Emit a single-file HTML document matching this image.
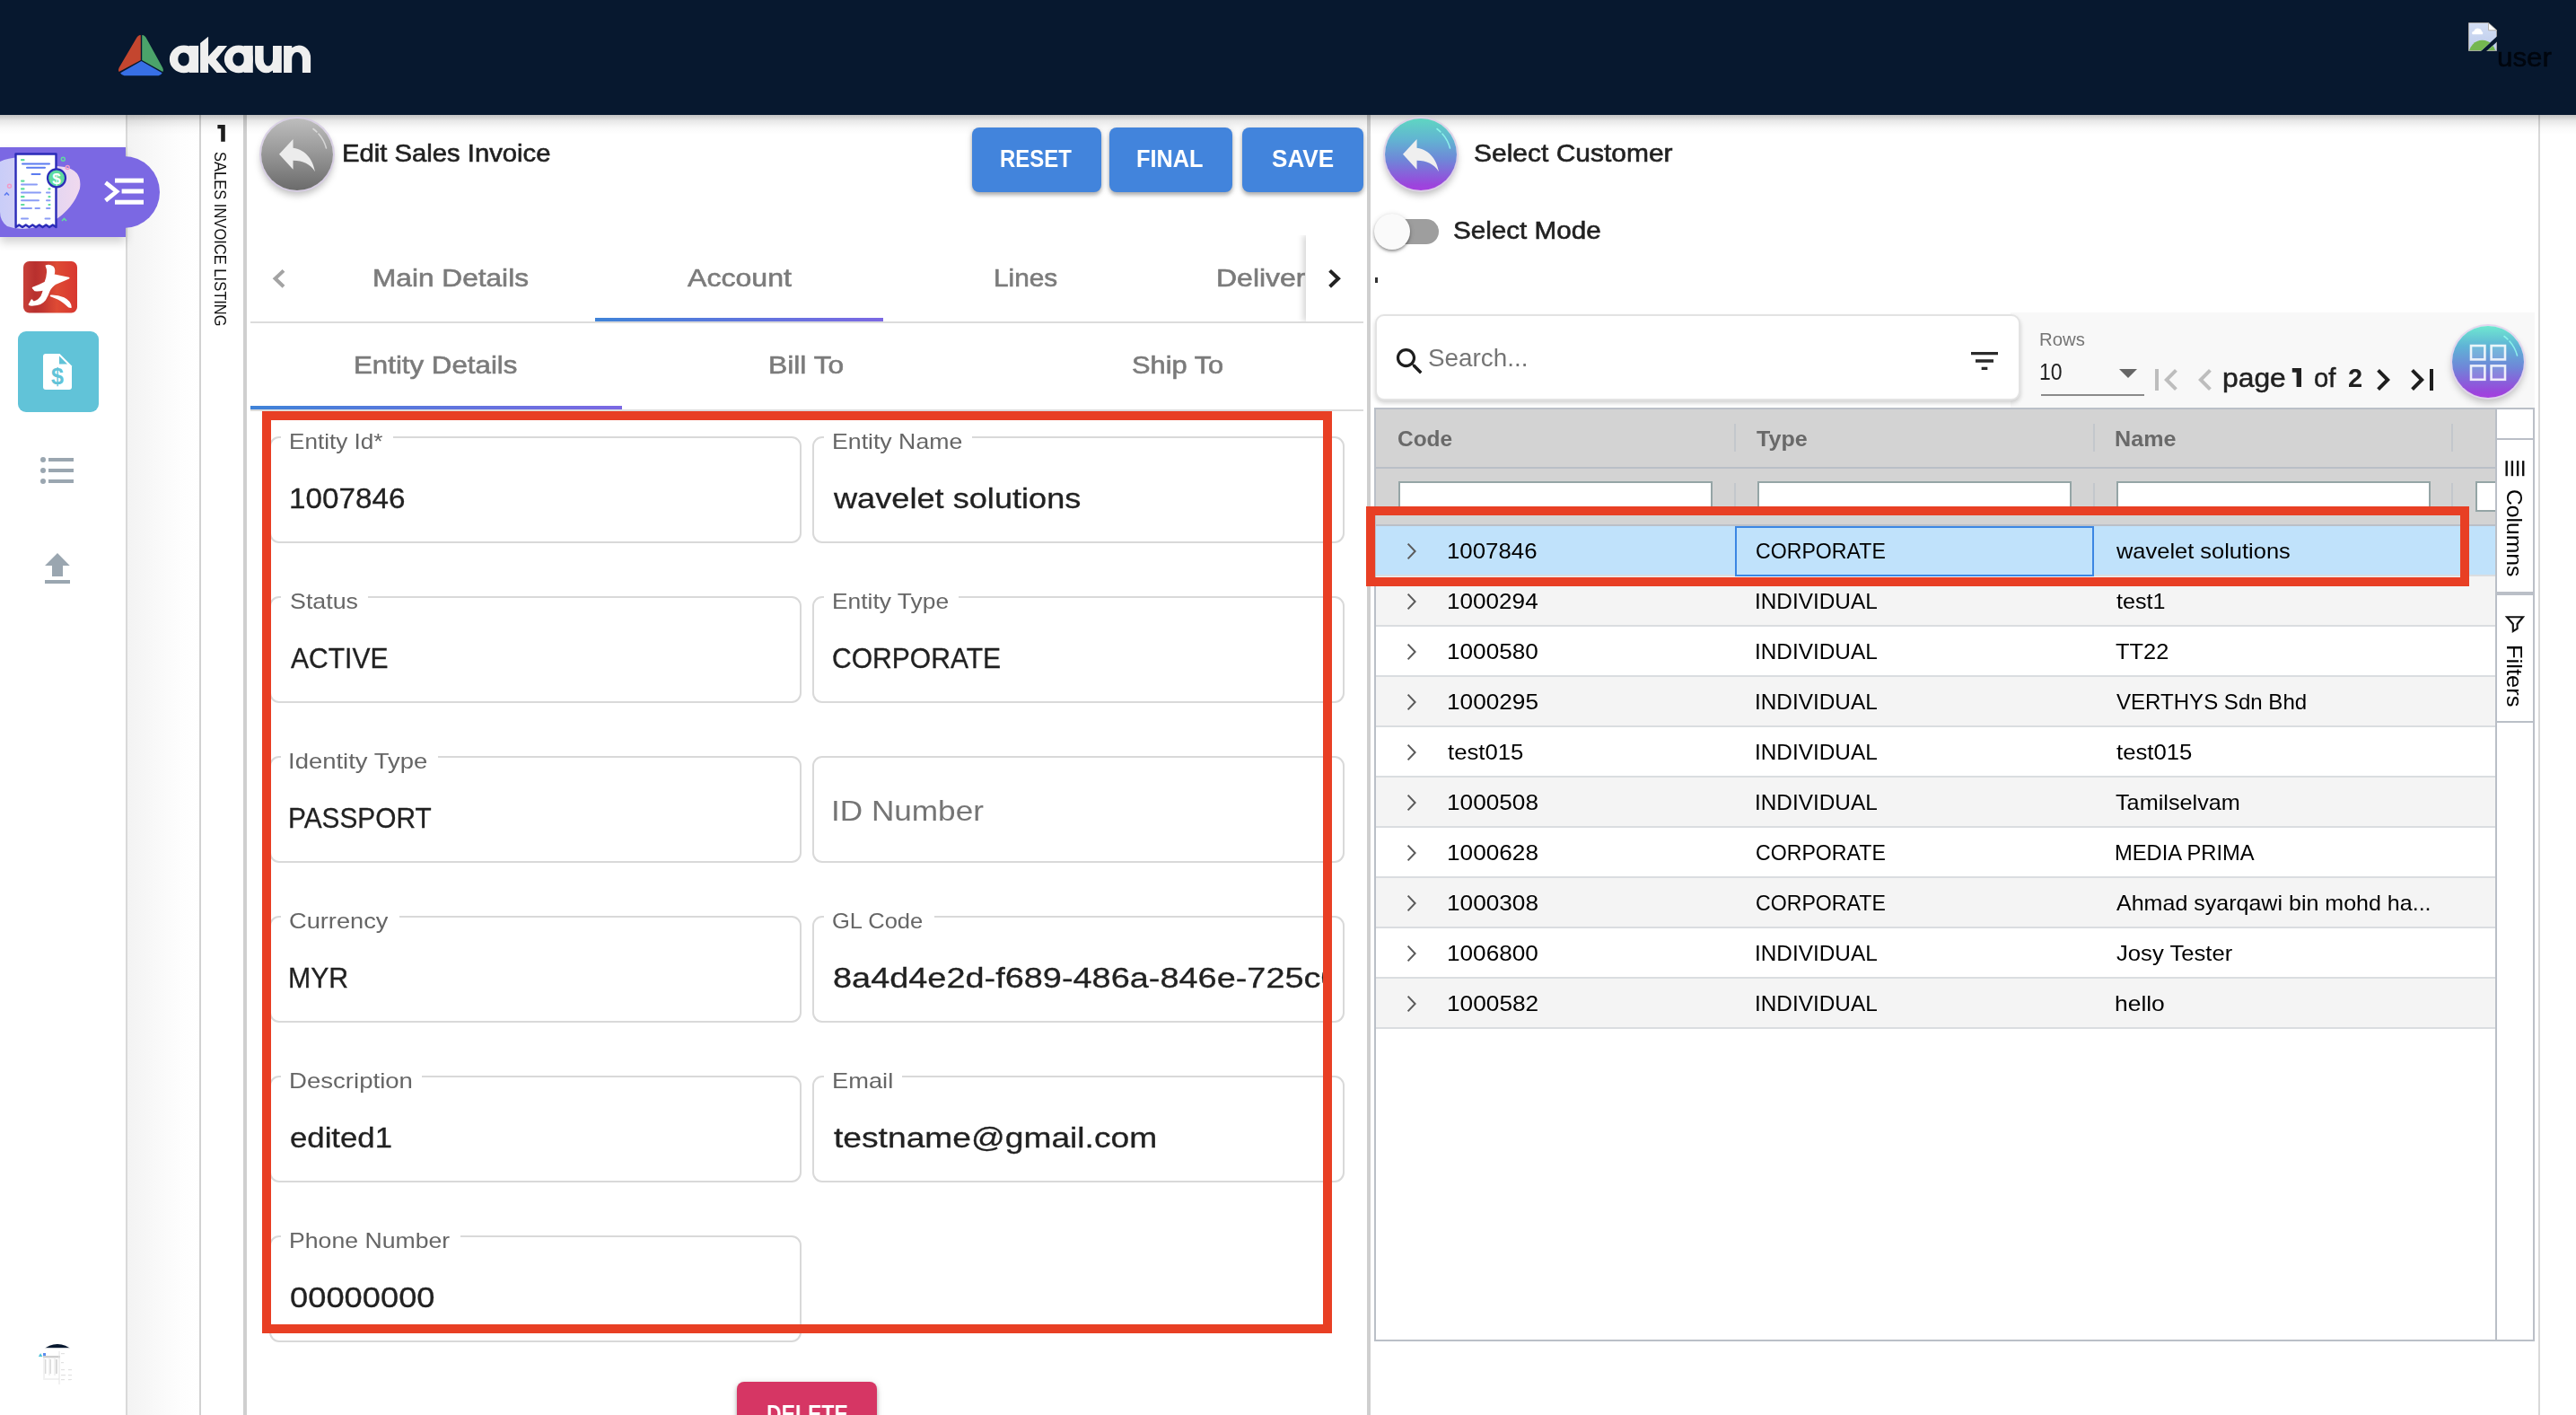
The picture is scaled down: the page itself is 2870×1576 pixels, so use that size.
<!DOCTYPE html><html><head><meta charset="utf-8"><title>Edit Sales Invoice</title><style>
html,body{margin:0;padding:0;background:#fff;overflow:hidden;}
body{width:2870px;height:1576px;position:relative;overflow:hidden;font-family:"Liberation Sans",sans-serif;}
.abs{position:absolute;}
.t{position:absolute;white-space:nowrap;line-height:1;transform-origin:0 0;font-family:"Liberation Sans",sans-serif;}
.btn{border-radius:8px;box-shadow:0 3px 4px rgba(0,0,0,.28),0 1px 8px rgba(0,0,0,.12);}
.fld{position:absolute;box-sizing:border-box;border:2px solid #d9d9d9;border-radius:11px;height:118.5px;width:593.5px;}
.notch{position:absolute;height:4px;background:#fff;}
.clip{position:absolute;overflow:hidden;}
</style></head><body>
<!-- ===== base panels ===== -->
<div class="abs" style="left:0;top:0;width:2870px;height:128px;background:#07182f"></div>
<!-- sidebar columns -->
<div class="abs" style="left:0;top:128px;width:140px;height:1448px;background:#fff"></div>
<div class="abs" style="left:140px;top:128px;width:2px;height:1448px;background:#d9d9d9"></div>
<div class="abs" style="left:142px;top:128px;width:80px;height:1448px;background:linear-gradient(90deg,#f3f3f3,#fdfdfd 70%,#fff)"></div>
<div class="abs" style="left:222px;top:128px;width:2px;height:1448px;background:#d2d2d2"></div>
<div class="abs" style="left:271px;top:128px;width:4px;height:1448px;background:#cfcfcf"></div>
<div class="abs" style="left:1523px;top:128px;width:4px;height:1448px;background:#cfcfcf"></div>
<div class="abs" style="left:2828px;top:128px;width:2px;height:1448px;background:#d9d9d9"></div>
<!-- header shadow -->
<div class="abs" style="left:0;top:128px;width:2870px;height:22px;background:linear-gradient(180deg,rgba(0,0,0,.24),rgba(0,0,0,.09) 30%,rgba(0,0,0,.025) 65%,rgba(0,0,0,0))"></div>

<!-- ===== logo ===== -->
<svg class="abs" style="left:128px;top:34px" width="60" height="56" viewBox="128 34 60 56">
  <path d="M156.8 40.3 Q157.2 38.6 155.2 39.2 Q153.6 39.8 152.4 41.8 L132.6 75.6 Q131.2 78.2 132.6 80 L156.8 66.9 Z" fill="#c4462f"/>
  <path d="M158.2 40.3 Q157.8 38.6 159.8 39.2 Q161.4 39.8 162.6 41.8 L181.2 75.6 Q182.6 78.2 181.4 80 L158.2 66.9 Z" fill="#4ba36a"/>
  <path d="M157.5 68 L180.6 81.2 Q179.6 83.7 176.6 84.2 L138.4 84.2 Q135.2 83.7 134.2 81.2 Z" fill="#376fe6"/>
</svg>
<!-- akaun wordmark (custom paths) -->
<svg class="abs" style="left:186px;top:38px" width="164" height="46" viewBox="186 38 164 46" fill="#efefef">
  <path fill-rule="evenodd" d="M204.9 50.6 a16 15.3 0 1 0 0 30.6 a16 15.3 0 1 0 0 -30.6 Z M204.7 58.4 a6.4 7.5 0 1 1 0 15 a6.4 7.5 0 1 1 0 -15 Z"/>
  <rect x="210.7" y="50.9" width="10.5" height="30"/>
  <path d="M223.1 48 L232.1 40.8 V62.7 L243 50.9 H253.1 L240.7 66.2 L253.1 80.9 H241.5 L232.1 70.2 V80.9 H223.1 Z"/>
  <path fill-rule="evenodd" d="M265.9 50.6 a16 15.3 0 1 0 0 30.6 a16 15.3 0 1 0 0 -30.6 Z M265.7 58.4 a6.4 7.5 0 1 1 0 15 a6.4 7.5 0 1 1 0 -15 Z"/>
  <rect x="271.7" y="50.9" width="10.1" height="30"/>
  <path d="M284.1 50.9 H293.6 V65.5 A5.2 8 0 0 0 304 65.5 V50.9 H313.8 V80.9 H304 V78.4 Q300.2 81.3 296.5 81.3 A12.4 14 0 0 1 284.1 67 Z"/>
  <path d="M316.1 80.9 V50.9 H325.2 V53.3 Q329 50.4 333 50.4 A13.1 14 0 0 1 346.1 64.5 V80.9 H336.9 V66 A5.85 8 0 0 0 325.2 66 V80.9 Z"/>
</svg>
<!-- broken image icon -->
<svg class="abs" style="left:2749.8px;top:24.8px" width="32.2" height="32.2" viewBox="-0.5 -0.5 33 33">
  <defs><linearGradient id="sky" x1="0" y1="0" x2="0" y2="1"><stop offset="0" stop-color="#d3def5"/><stop offset="1" stop-color="#bccbea"/></linearGradient>
  <clipPath id="pg"><path d="M0 0 H22.6 L32 8.5 V15.7 L14.1 32 H0 Z M32 21.9 V32 H20.6 Z"/></clipPath></defs>
  <g clip-path="url(#pg)">
    <rect x="0" y="0" width="32" height="32" fill="url(#sky)"/>
    <ellipse cx="15.5" cy="36" rx="15.5" ry="16.2" fill="#74b750"/>
    <path d="M4.2 13.2 Q2.6 10.4 6 9.6 Q7.4 5.6 11.4 6.4 Q14.6 6.8 14.8 9.8 Q17 10.6 15.8 13.2 Z" fill="#fff"/>
    <path d="M22.6 0 V8.5 H32 Z" fill="#fff"/>
  </g>
  <path d="M0 0 H22.6 L32 8.5 V15.7 M14.1 32 H0 V0 M22.6 0 V8.5 H32 M32 21.9 V32 H20.6" fill="none" stroke="#b4b0ac" stroke-width="1"/>
</svg>

<!-- ===== sidebar purple block ===== -->
<div class="abs" style="left:0;top:164px;width:140px;height:100px;background:#7b68e3;box-shadow:0 6px 10px rgba(0,0,0,.18)"></div>
<div class="abs" style="left:100px;top:174px;width:78px;height:80px;background:#7b68e3;border-radius:0 40px 40px 0"></div>
<!-- blob -->
<svg class="abs" style="left:0;top:164px" width="140" height="100" viewBox="0 164 140 100">
  <defs><linearGradient id="blob" x1="0" x2="1"><stop offset="0" stop-color="#c9cdf8"/><stop offset="1" stop-color="#f0d9ee"/></linearGradient></defs>
  <path d="M0 180 Q12 174 30 176 Q52 184 72 186 Q92 190 89 210 Q82 232 60 246 Q30 260 8 252 Q0 246 0 236 Z" fill="url(#blob)"/>
  <!-- receipt -->
  <path d="M17.5 171.5 H62.5 V253 l-3.7 -2.6 l-3.8 2.6 l-3.7 -2.6 l-3.8 2.6 l-3.7 -2.6 l-3.8 2.6 l-3.7 -2.6 l-3.8 2.6 l-3.7 -2.6 l-3.8 2.6 l-3.7 -2.6 l-3.7 2.6 Z" fill="#fff" stroke="#2b2bb8" stroke-width="2.4" stroke-linejoin="round"/>
  <g stroke="#5b7bf0" stroke-width="2" stroke-linecap="round">
    <path d="M25 182.5 H55 M30 186.8 H50 M35.5 194 H44.5"/>
  </g>
  <g stroke="#8a9cf6" stroke-width="2" stroke-linecap="round">
    <path d="M24 205.5 H41 M24 214.5 H45 M24 223.2 H43 M24 232 H35 M39.5 232 H44 M52 232 H55.5 M52 223.2 H55.5 M52 214.5 H55.5 M24 243.5 H31 M50.5 243.5 H55.5"/>
  </g>
  <g stroke="#5fdc9f" stroke-width="2.2" stroke-linecap="round">
    <path d="M24 178.2 H26.5 M24 201.6 H26.5 M24 210.4 H26.5 M24 219.2 H26.5 M24 228 H26.5 M54.5 210.4 H55.5 M54.5 219.2 H55.5 M54.5 228 H55.5"/>
  </g>
  <circle cx="63" cy="198.3" r="10" fill="#5fdc9f" stroke="#2b2bb8" stroke-width="2.2"/>
  <text x="63" y="204.5" font-family="Liberation Sans" font-weight="bold" font-size="17" fill="#fff" text-anchor="middle">$</text>
  <circle cx="70.3" cy="177.3" r="2" fill="none" stroke="#5fdc9f" stroke-width="1.4"/>
  <circle cx="75.2" cy="186.5" r="2" fill="none" stroke="#f29ac6" stroke-width="1.4"/>
  <circle cx="10.5" cy="207.3" r="2" fill="none" stroke="#f29ac6" stroke-width="1.4"/>
  <path d="M5 217.5 l2.5 -2.5 l2.5 2.5" fill="none" stroke="#5b7bf0" stroke-width="1.6"/>
  <path d="M69 246 l2.5 -2.5 l2.5 2.5" fill="none" stroke="#5fdc9f" stroke-width="1.6"/>
</svg>
<!-- menu-open icon -->
<svg class="abs" style="left:112px;top:194px" width="52" height="40" viewBox="112 194 52 40">
  <g fill="#fff"><rect x="128" y="198.6" width="32" height="5"/><rect x="135.6" y="210.5" width="24.4" height="5"/><rect x="128" y="222.7" width="32" height="5"/></g>
  <path d="M117.6 203.4 L130 213.3 L117.6 223.4" fill="none" stroke="#fff" stroke-width="4.6"/>
</svg>

<!-- red 大 icon -->
<svg class="abs" style="left:26px;top:291px" width="60" height="58" viewBox="0 0 60 58">
  <defs><linearGradient id="rg" x1="0" x2="1"><stop offset="0" stop-color="#c8413a"/><stop offset=".22" stop-color="#b8302e"/><stop offset=".36" stop-color="#c23631"/><stop offset=".62" stop-color="#de4a34"/><stop offset="1" stop-color="#d83730"/></linearGradient></defs>
  <rect x="0" y="0" width="60" height="57.5" rx="6.5" fill="url(#rg)"/>
  <path d="M25.5 5 Q29 3.8 33 6.5 Q35.5 9.5 33.5 15.2 Q42 17.2 50.6 18.6 Q44 21.5 36.6 24.6 Q31 28 28.6 33.2 Q27 38 24 43 Q19.5 48.6 11.6 48.6 Q8 49 6.6 48.2 L9.4 43.2 Q10.4 45.4 12 45.4 Q17.6 43.6 20.4 38.6 Q22 35.4 22.8 31.6 Q16.6 32.8 13 32.4 L10.6 29.6 Q19 26.6 24.4 23.6 Q26.6 18 27 12 Q27 8 25.5 5 Z" fill="#fff" stroke="#fff" stroke-width="1.8" stroke-linejoin="round"/>
  <path d="M30.6 38.4 Q38 38 45 41 Q52.4 44.6 53 51.2 L50.6 50.6 Q44 44.6 38.6 41.8 Q34 39.6 30.6 38.4 Z" fill="#fff" stroke="#fff" stroke-width="1.6" stroke-linejoin="round"/>
</svg>

<!-- teal doc box -->
<div class="abs" style="left:20px;top:369px;width:90px;height:90px;border-radius:9px;background:#61c3d8"></div>
<svg class="abs" style="left:47px;top:393px" width="34" height="42" viewBox="47 393 34 42">
  <path d="M51 394 H66.5 L80 407.5 V431 Q80 434 77 434 H51 Q48 434 48 431 V397 Q48 394 51 394 Z" fill="#fff"/>
  <path d="M66 396.5 V405.5 H75 Z" fill="#61c3d8"/>
  <text x="64" y="427.6" font-family="Liberation Sans" font-weight="bold" font-size="25" fill="#61c3d8" text-anchor="middle">$</text>
</svg>
<!-- list icon -->
<svg class="abs" style="left:44px;top:506px" width="40" height="36" viewBox="44 506 40 36" fill="#9aa6b0">
  <circle cx="48" cy="512" r="3"/><circle cx="48" cy="524" r="3"/><circle cx="48" cy="536" r="3"/>
  <rect x="54" y="510" width="28" height="4"/><rect x="54" y="522" width="28" height="4"/><rect x="54" y="534" width="28" height="4"/>
</svg>
<!-- upload icon -->
<svg class="abs" style="left:48px;top:614px" width="32" height="38" viewBox="48 614 32 38" fill="#9aa6b0">
  <path d="M64 616 L77.8 630 H70 V642 H58 V630 H50 Z"/><rect x="50" y="646" width="28" height="4"/>
</svg>
<!-- bottom thumbnail -->
<svg class="abs" style="left:38px;top:1494px" width="52" height="52" viewBox="38 1494 52 52">
  <defs><clipPath id="cc"><circle cx="64" cy="1520" r="23"/></clipPath></defs>
  <g clip-path="url(#cc)">
    <rect x="38" y="1494" width="52" height="52" fill="#fff"/>
    <rect x="38" y="1494" width="52" height="7.2" fill="#07182f"/>
    <rect x="48" y="1507" width="3" height="3" fill="#5b8def"/>
    <rect x="48" y="1510" width="19" height="2.4" fill="#cfcfcf"/>
    <g stroke="#e4e4e4" stroke-width="1"><path d="M49 1513 V1535 M55 1513 V1532 M61 1513 V1532 M66 1505 V1542 M48 1536 H66"/></g>
    <g fill="#d9d9d9"><rect x="50" y="1514" width="1.4" height="16"/><rect x="55.5" y="1514" width="1.4" height="16"/><rect x="62" y="1514" width="2" height="16"/></g>
    <g fill="#e2e2e2"><rect x="68" y="1507" width="4" height="1.2"/><rect x="68" y="1517" width="3" height="1.2"/><rect x="68" y="1525" width="4" height="1.2"/><rect x="68" y="1531" width="5" height="1.2"/><rect x="76" y="1525" width="4" height="1.2"/><rect x="76" y="1531" width="4" height="1.2"/><rect x="68" y="1536" width="4" height="1.2"/><rect x="76" y="1536" width="4" height="1.2"/></g>
    <path d="M42 1511 l3 -4 l2.4 4 Z" fill="#4fc3d9"/>
  </g>
</svg>

<!-- ===== main form panel ===== -->
<!-- circle back (gray) -->
<div class="abs" style="left:291px;top:132px;width:80px;height:80px;border-radius:50%;background:linear-gradient(180deg,#bdbdbd 0%,#9a9a9a 45%,#6b6b6b 100%);box-shadow:0 0 0 2px rgba(215,205,228,.9),0 5px 8px rgba(0,0,0,.28)"></div>
<svg class="abs" style="left:291px;top:132px" width="80" height="80" viewBox="0 0 80 80">
  <path d="M58 11.5 Q69 20 72.5 33" fill="none" stroke="rgba(255,255,255,.55)" stroke-width="1.6" stroke-linecap="round" stroke-dasharray="5 3 40"/>
  <g transform="translate(13.33,10.95) scale(2.2222,2.41)"><path fill="#ececec" d="M10 9V5l-7 7 7 7v-4.1c5 0 8.5 1.6 11 5.1-1-5-4-10-11-11z"/></g>
</svg>
<!-- buttons -->
<div class="abs btn" style="left:1083px;top:142px;width:144px;height:72px;background:#4284dc"></div>
<div class="abs btn" style="left:1236px;top:142px;width:137px;height:72px;background:#4284dc"></div>
<div class="abs btn" style="left:1384px;top:142px;width:135px;height:72px;background:#4284dc"></div>
<div class="abs btn" style="left:821px;top:1539px;width:156px;height:72px;background:#d63664"></div>

<!-- tab row 1 -->
<div class="abs" style="left:279px;top:357.5px;width:1240px;height:2px;background:#dcdcdc"></div>
<div class="abs" style="left:662.5px;top:354px;width:321px;height:4.4px;background:linear-gradient(90deg,#3f83d8,#7b68e3)"></div>
<svg class="abs" style="left:298px;top:296px" width="26" height="30" viewBox="298 296 26 30"><path d="M316 301.4 L306.6 310.3 L316 319.2" fill="none" stroke="#a3a3a3" stroke-width="4"/></svg>
<!-- right pagination arrow box -->
<div class="abs" style="left:1440px;top:262px;width:79px;height:95.5px;overflow:hidden"><div class="abs" style="left:14.5px;top:0;width:64.5px;height:95.5px;background:#fff;box-shadow:-3px 0 7px rgba(0,0,0,.17)"></div></div>
<svg class="abs" style="left:1474px;top:296px" width="26" height="30" viewBox="1474 296 26 30"><path d="M1481.6 301.4 L1491 310.3 L1481.6 319.2" fill="none" stroke="#222" stroke-width="4"/></svg>
<!-- tab row 2 -->
<div class="abs" style="left:279px;top:455.6px;width:1240px;height:2px;background:#dcdcdc"></div>
<div class="abs" style="left:279px;top:452px;width:413.5px;height:4.4px;background:linear-gradient(90deg,#3f83d8,#7b68e3)"></div>

<!-- ===== right panel ===== -->
<div class="abs" style="left:1542.5px;top:132px;width:80px;height:80px;border-radius:50%;background:linear-gradient(180deg,#5fd6c2 0%,#62b3d2 30%,#6f86d8 58%,#9a46dc 92%,#a63ee0 100%);box-shadow:0 0 0 2px rgba(222,208,232,.9),0 5px 8px rgba(0,0,0,.28)"></div>
<svg class="abs" style="left:1542.5px;top:132px" width="80" height="80" viewBox="0 0 80 80">
  <path d="M58 11.5 Q69 20 72.5 33" fill="none" stroke="rgba(150,255,240,.8)" stroke-width="1.6" stroke-linecap="round" stroke-dasharray="5 3 40"/>
  <g transform="translate(13.33,10.95) scale(2.2222,2.41)"><path fill="#efefef" d="M10 9V5l-7 7 7 7v-4.1c5 0 8.5 1.6 11 5.1-1-5-4-10-11-11z"/></g>
</svg>
<!-- toggle -->
<div class="abs" style="left:1535px;top:244px;width:68px;height:28px;border-radius:14px;background:#9e9e9e"></div>
<div class="abs" style="left:1531px;top:238px;width:40px;height:40px;border-radius:50%;background:#fafafa;box-shadow:0 2px 3px rgba(0,0,0,.35),0 1px 6px rgba(0,0,0,.14)"></div>
<div class="abs" style="left:1532px;top:309px;width:3px;height:6px;background:#333"></div>

<!-- toolbar bg -->
<div class="abs" style="left:2240px;top:348px;width:584px;height:106px;background:#f8f8f8"></div>
<!-- search box -->
<div class="abs" style="left:1532px;top:350px;width:719px;height:96px;border-radius:10px;background:#fff;border:2px solid #e3e3e3;box-sizing:border-box;box-shadow:0 3px 5px rgba(0,0,0,.18)"></div>
<svg class="abs" style="left:1551px;top:383px" width="39.2" height="39.2" viewBox="0 0 24 24"><path fill="#1e1e1e" d="M15.5 14h-.79l-.28-.27C15.41 12.59 16 11.11 16 9.5 16 5.91 13.09 3 9.5 3S3 5.91 3 9.5 5.91 16 9.5 16c1.61 0 3.09-.59 4.23-1.57l.27.28v.79l5 4.99L20.49 19l-4.99-5zm-6 0C7.01 14 5 11.99 5 9.5S7.01 5 9.5 5 14 7.01 14 9.5 11.99 14 9.5 14z"/></svg>
<svg class="abs" style="left:2191px;top:382px" width="40" height="40" viewBox="0 0 24 24"><path fill="#2a2a2a" d="M10 18h4v-2h-4v2zM3 6v2h18V6H3zm3 7h12v-2H6v2z"/></svg>
<!-- rows select -->
<div class="abs" style="left:2273.5px;top:439px;width:115.5px;height:2px;background:#8a8a8a"></div>
<svg class="abs" style="left:2361px;top:410.5px" width="20" height="10" viewBox="0 0 20 10"><path d="M0 0 H20 L10 10 Z" fill="#666"/></svg>
<!-- paginator icons -->
<svg class="abs" style="left:2388.5px;top:399px" width="48" height="48" viewBox="0 0 24 24"><path fill="#bdbdbd" d="M18.41 16.59L13.82 12l4.59-4.59L17 6l-6 6 6 6zM6 6h2v12H6z"/></svg>
<svg class="abs" style="left:2433px;top:399px" width="48" height="48" viewBox="0 0 24 24"><path fill="#bdbdbd" d="M15.41 7.41L14 6l-6 6 6 6 1.41-1.41L10.83 12z"/></svg>
<svg class="abs" style="left:2631.3px;top:399px" width="48" height="48" viewBox="0 0 24 24"><path fill="#1e1e1e" d="M10 6L8.59 7.41 13.17 12l-4.58 4.59L10 18l6-6z"/></svg>
<svg class="abs" style="left:2675.3px;top:399px" width="48" height="48" viewBox="0 0 24 24"><path fill="#1e1e1e" d="M5.59 7.41L10.18 12l-4.59 4.59L7 18l6-6-6-6zM16 6h2v12h-2z"/></svg>
<!-- grid circle button -->
<div class="abs" style="left:2731.5px;top:362.5px;width:80px;height:80px;border-radius:50%;background:linear-gradient(180deg,#6fe8d0 0%,#5fb4d6 28%,#6f86d8 58%,#9a46dc 92%,#a63ee0 100%);box-shadow:0 0 0 2px rgba(226,212,238,.9),0 5px 8px rgba(0,0,0,.25)"></div>
<svg class="abs" style="left:2731.5px;top:362.5px" width="80" height="80" viewBox="0 0 80 80">
  <path d="M58 11.5 Q69 20 72.5 33" fill="none" stroke="rgba(150,255,240,.8)" stroke-width="1.6" stroke-linecap="round" stroke-dasharray="5 3 40"/>
  <g fill="rgba(255,255,255,.12)" stroke="rgba(255,255,255,.86)" stroke-width="2.6"><rect x="21" y="22" width="15.4" height="15.4"/><rect x="43.6" y="22" width="15.4" height="15.4"/><rect x="21" y="44.4" width="15.4" height="15.4"/><rect x="43.6" y="44.4" width="15.4" height="15.4"/></g>
</svg>
<!-- custom "1" glyphs (Poppins-like, no foot) -->
<svg class="abs" style="left:242px;top:138px" width="10" height="20" viewBox="242 138 10 20"><path d="M242.4 139 H250.8 V157.8 H246.2 V143.2 H242.4 Z" fill="#1d1d1d"/></svg>
<svg class="abs" style="left:2553px;top:409px" width="12" height="23" viewBox="2553 409 12 23"><path d="M2553.8 410 H2564 V431 H2558.6 V414.8 H2553.8 Z" fill="#212121"/></svg>

<div class="fld" style="left:299.5px;top:486.3px"></div>
<div class="notch" style="left:313px;top:485.3px;width:125px"></div>
<div class="fld" style="left:904.5px;top:486.3px"></div>
<div class="notch" style="left:918px;top:485.3px;width:165px"></div>
<div class="fld" style="left:299.5px;top:664.3px"></div>
<div class="notch" style="left:313px;top:663.3px;width:97px"></div>
<div class="fld" style="left:904.5px;top:664.3px"></div>
<div class="notch" style="left:918px;top:663.3px;width:150px"></div>
<div class="fld" style="left:299.5px;top:842.3px"></div>
<div class="notch" style="left:313px;top:841.3px;width:175px"></div>
<div class="fld" style="left:904.5px;top:842.3px"></div>
<div class="fld" style="left:299.5px;top:1020.3px"></div>
<div class="notch" style="left:313px;top:1019.3px;width:132px"></div>
<div class="fld" style="left:904.5px;top:1020.3px"></div>
<div class="notch" style="left:918px;top:1019.3px;width:123px"></div>
<div class="fld" style="left:299.5px;top:1198.3px"></div>
<div class="notch" style="left:313px;top:1197.3px;width:157px"></div>
<div class="fld" style="left:904.5px;top:1198.3px"></div>
<div class="notch" style="left:918px;top:1197.3px;width:87px"></div>
<div class="fld" style="left:299.5px;top:1376.3px"></div>
<div class="notch" style="left:313px;top:1375.3px;width:200px"></div>
<div class="abs" style="left:1531px;top:454px;width:1293px;height:1040px;box-sizing:border-box;border:2px solid #babfc7;background:#fff"></div>
<div class="abs" style="left:1533px;top:456px;width:1248px;height:129px;background:#d3d3d3"></div>
<div class="abs" style="left:1533px;top:520px;width:1248px;height:2px;background:#babfc7"></div>
<div class="abs" style="left:1533px;top:584px;width:1248px;height:2px;background:#babfc7"></div>
<div class="abs" style="left:1931.5px;top:472px;width:2px;height:31px;background:#c3c7cc"></div>
<div class="abs" style="left:1931.5px;top:538px;width:2px;height:30px;background:#c3c7cc"></div>
<div class="abs" style="left:2331.5px;top:472px;width:2px;height:31px;background:#c3c7cc"></div>
<div class="abs" style="left:2331.5px;top:538px;width:2px;height:30px;background:#c3c7cc"></div>
<div class="abs" style="left:2731px;top:472px;width:2px;height:31px;background:#c3c7cc"></div>
<div class="abs" style="left:2731px;top:538px;width:2px;height:30px;background:#c3c7cc"></div>
<div class="abs" style="left:1557.5px;top:535.5px;width:350.5px;height:34px;box-sizing:border-box;border:2px solid #95a5a6;background:#fff;"></div>
<div class="abs" style="left:1957.5px;top:535.5px;width:350.5px;height:34px;box-sizing:border-box;border:2px solid #95a5a6;background:#fff;"></div>
<div class="abs" style="left:2358px;top:535.5px;width:350px;height:34px;box-sizing:border-box;border:2px solid #95a5a6;background:#fff;"></div>
<div class="abs" style="left:2757.5px;top:535.5px;width:30px;height:34px;box-sizing:border-box;border:2px solid #95a5a6;background:#fff;border-right:none;"></div>
<div class="abs" style="left:1533px;top:586px;width:1248px;height:54px;background:#c0e2fb"></div>
<div class="abs" style="left:1533px;top:640px;width:1248px;height:2px;background:#dadde0"></div>
<svg class="abs" style="left:1564px;top:602.3px" width="18" height="24" viewBox="0 0 18 24"><path d="M4.6 3.6 L12.6 12 L4.6 20.4" fill="none" stroke="#5a5a5a" stroke-width="2"/></svg>
<div class="abs" style="left:1533px;top:642px;width:1248px;height:54px;background:#f4f4f4"></div>
<div class="abs" style="left:1533px;top:696px;width:1248px;height:2px;background:#dadde0"></div>
<svg class="abs" style="left:1564px;top:658.3px" width="18" height="24" viewBox="0 0 18 24"><path d="M4.6 3.6 L12.6 12 L4.6 20.4" fill="none" stroke="#5a5a5a" stroke-width="2"/></svg>
<div class="abs" style="left:1533px;top:698px;width:1248px;height:54px;background:#fff"></div>
<div class="abs" style="left:1533px;top:752px;width:1248px;height:2px;background:#dadde0"></div>
<svg class="abs" style="left:1564px;top:714.3px" width="18" height="24" viewBox="0 0 18 24"><path d="M4.6 3.6 L12.6 12 L4.6 20.4" fill="none" stroke="#5a5a5a" stroke-width="2"/></svg>
<div class="abs" style="left:1533px;top:754px;width:1248px;height:54px;background:#f4f4f4"></div>
<div class="abs" style="left:1533px;top:808px;width:1248px;height:2px;background:#dadde0"></div>
<svg class="abs" style="left:1564px;top:770.3px" width="18" height="24" viewBox="0 0 18 24"><path d="M4.6 3.6 L12.6 12 L4.6 20.4" fill="none" stroke="#5a5a5a" stroke-width="2"/></svg>
<div class="abs" style="left:1533px;top:810px;width:1248px;height:54px;background:#fff"></div>
<div class="abs" style="left:1533px;top:864px;width:1248px;height:2px;background:#dadde0"></div>
<svg class="abs" style="left:1564px;top:826.3px" width="18" height="24" viewBox="0 0 18 24"><path d="M4.6 3.6 L12.6 12 L4.6 20.4" fill="none" stroke="#5a5a5a" stroke-width="2"/></svg>
<div class="abs" style="left:1533px;top:866px;width:1248px;height:54px;background:#f4f4f4"></div>
<div class="abs" style="left:1533px;top:920px;width:1248px;height:2px;background:#dadde0"></div>
<svg class="abs" style="left:1564px;top:882.3px" width="18" height="24" viewBox="0 0 18 24"><path d="M4.6 3.6 L12.6 12 L4.6 20.4" fill="none" stroke="#5a5a5a" stroke-width="2"/></svg>
<div class="abs" style="left:1533px;top:922px;width:1248px;height:54px;background:#fff"></div>
<div class="abs" style="left:1533px;top:976px;width:1248px;height:2px;background:#dadde0"></div>
<svg class="abs" style="left:1564px;top:938.3px" width="18" height="24" viewBox="0 0 18 24"><path d="M4.6 3.6 L12.6 12 L4.6 20.4" fill="none" stroke="#5a5a5a" stroke-width="2"/></svg>
<div class="abs" style="left:1533px;top:978px;width:1248px;height:54px;background:#f4f4f4"></div>
<div class="abs" style="left:1533px;top:1032px;width:1248px;height:2px;background:#dadde0"></div>
<svg class="abs" style="left:1564px;top:994.3px" width="18" height="24" viewBox="0 0 18 24"><path d="M4.6 3.6 L12.6 12 L4.6 20.4" fill="none" stroke="#5a5a5a" stroke-width="2"/></svg>
<div class="abs" style="left:1533px;top:1034px;width:1248px;height:54px;background:#fff"></div>
<div class="abs" style="left:1533px;top:1088px;width:1248px;height:2px;background:#dadde0"></div>
<svg class="abs" style="left:1564px;top:1050.3px" width="18" height="24" viewBox="0 0 18 24"><path d="M4.6 3.6 L12.6 12 L4.6 20.4" fill="none" stroke="#5a5a5a" stroke-width="2"/></svg>
<div class="abs" style="left:1533px;top:1090px;width:1248px;height:54px;background:#f4f4f4"></div>
<div class="abs" style="left:1533px;top:1144px;width:1248px;height:2px;background:#dadde0"></div>
<svg class="abs" style="left:1564px;top:1106.3px" width="18" height="24" viewBox="0 0 18 24"><path d="M4.6 3.6 L12.6 12 L4.6 20.4" fill="none" stroke="#5a5a5a" stroke-width="2"/></svg>
<div class="abs" style="left:1933px;top:586px;width:400px;height:55.5px;box-sizing:border-box;border:2px solid #3b86e3"></div>
<div class="abs" style="left:2780px;top:456px;width:40px;height:1036px;background:#fff;border-left:2px solid #babfc7"></div>
<div class="abs" style="left:2780px;top:488px;width:42px;height:2px;background:#babfc7"></div>
<div class="abs" style="left:2780px;top:658.5px;width:42px;height:4px;background:#babfc7"></div>
<div class="abs" style="left:2780px;top:803px;width:42px;height:2px;background:#babfc7"></div>
<svg class="abs" style="left:2790px;top:512px" width="24" height="20" viewBox="2790 512 24 20" fill="#111"><rect x="2791.5" y="513.2" width="2.4" height="17"/><rect x="2797.7" y="513.2" width="2.4" height="17"/><rect x="2803.9" y="513.2" width="2.4" height="17"/><rect x="2810" y="513.2" width="2.4" height="17"/></svg>
<svg class="abs" style="left:2789px;top:679px" width="26" height="28" viewBox="2789 679 26 28"><path d="M2793 687.2 H2811 L2804.6 695 V700.2 L2799.8 703.2 V695 Z" fill="none" stroke="#111" stroke-width="2.1" stroke-linejoin="miter"/></svg>
<div class="abs" style="left:0;top:0;width:2870px;height:1576px;will-change:transform">
<span class="t" style="left:2781.74px;top:48.63px;transform:scaleX(1.0614);font-size:29.5px;color:#01060e;-webkit-text-stroke:0.5px #01060e">user</span>
<span class="t" style="left:253.66px;top:169.29px;transform:rotate(90deg) scaleX(0.8929);font-size:18.5px;color:#111">SALES INVOICE LISTING</span>
<span class="t" style="left:381.47px;top:156.80px;transform:scaleX(1.0445);font-size:28px;color:#212121;-webkit-text-stroke:0.6px #212121">Edit Sales Invoice</span>
<span class="t" style="left:1641.56px;top:156.80px;transform:scaleX(1.0706);font-size:28px;color:#212121;-webkit-text-stroke:0.6px #212121">Select Customer</span>
<span class="t" style="left:1618.57px;top:243.47px;transform:scaleX(1.0770);font-size:27.5px;color:#212121;-webkit-text-stroke:0.6px #212121">Select Mode</span>
<span class="t" style="left:1114.00px;top:163.89px;transform:scaleX(0.8863);font-size:27px;color:#fff;font-weight:bold">RESET</span>
<span class="t" style="left:1266.42px;top:163.89px;transform:scaleX(0.9375);font-size:27px;color:#fff;font-weight:bold">FINAL</span>
<span class="t" style="left:1416.59px;top:163.89px;transform:scaleX(0.9661);font-size:27px;color:#fff;font-weight:bold">SAVE</span>
<span class="t" style="left:853.56px;top:1562.14px;transform:scaleX(0.8525);font-size:27px;color:#fff;font-weight:bold">DELETE</span>
<span class="t" style="left:415.03px;top:295.55px;transform:scaleX(1.1292);font-size:28px;color:#7b7b7b;-webkit-text-stroke:0.6px #7b7b7b">Main Details</span>
<span class="t" style="left:765.50px;top:295.55px;transform:scaleX(1.1455);font-size:28px;color:#7b7b7b;-webkit-text-stroke:0.6px #7b7b7b">Account</span>
<span class="t" style="left:1107.17px;top:295.55px;transform:scaleX(1.0646);font-size:28px;color:#7b7b7b;-webkit-text-stroke:0.6px #7b7b7b">Lines</span>
<div class="clip" style="left:1357.00px;top:289.55px;width:97.00px;height:39.2px"><span class="t" style="left:-2.50px;top:0;transform:scaleX(1.1421);font-size:28px;color:#7b7b7b;-webkit-text-stroke:0.6px #7b7b7b;top:6px">Delivery</span></div>
<span class="t" style="left:393.56px;top:393.05px;transform:scaleX(1.1164);font-size:28px;color:#7b7b7b;-webkit-text-stroke:0.6px #7b7b7b">Entity Details</span>
<span class="t" style="left:856.02px;top:393.05px;transform:scaleX(1.1350);font-size:28px;color:#7b7b7b;-webkit-text-stroke:0.6px #7b7b7b">Bill To</span>
<span class="t" style="left:1261.04px;top:393.05px;transform:scaleX(1.0998);font-size:28px;color:#7b7b7b;-webkit-text-stroke:0.6px #7b7b7b">Ship To</span>
<span class="t" style="left:321.68px;top:479.68px;transform:scaleX(1.0873);font-size:24px;color:#666666">Entity Id*</span>
<span class="t" style="left:926.64px;top:479.68px;transform:scaleX(1.1114);font-size:24px;color:#666666">Entity Name</span>
<span class="t" style="left:321.67px;top:538.91px;transform:scaleX(1.0389);font-size:32px;color:#212121;-webkit-text-stroke:0.3px #212121">1007846</span>
<span class="t" style="left:929.31px;top:538.91px;transform:scaleX(1.1300);font-size:32px;color:#212121;-webkit-text-stroke:0.3px #212121">wavelet solutions</span>
<span class="t" style="left:322.63px;top:657.68px;transform:scaleX(1.1172);font-size:24px;color:#666666">Status</span>
<span class="t" style="left:926.66px;top:657.68px;transform:scaleX(1.0995);font-size:24px;color:#666666">Entity Type</span>
<span class="t" style="left:323.75px;top:716.91px;transform:scaleX(0.9389);font-size:32px;color:#212121;-webkit-text-stroke:0.3px #212121">ACTIVE</span>
<span class="t" style="left:927.34px;top:716.91px;transform:scaleX(0.9394);font-size:32px;color:#212121;-webkit-text-stroke:0.3px #212121">CORPORATE</span>
<span class="t" style="left:321.23px;top:835.68px;transform:scaleX(1.1443);font-size:24px;color:#666666">Identity Type</span>
<span class="t" style="left:321.42px;top:894.91px;transform:scaleX(0.9319);font-size:32px;color:#212121;-webkit-text-stroke:0.3px #212121">PASSPORT</span>
<span class="t" style="left:322.39px;top:1013.68px;transform:scaleX(1.1335);font-size:24px;color:#666666">Currency</span>
<span class="t" style="left:927.47px;top:1013.68px;transform:scaleX(1.0638);font-size:24px;color:#666666">GL Code</span>
<span class="t" style="left:321.39px;top:1072.91px;transform:scaleX(0.9452);font-size:32px;color:#212121;-webkit-text-stroke:0.3px #212121">MYR</span>
<div class="clip" style="left:928.75px;top:1066.91px;width:545.25px;height:44.8px"><span class="t" style="left:-1.18px;top:0;transform:scaleX(1.1839);font-size:32px;color:#212121;-webkit-text-stroke:0.3px #212121;top:6px">8a4d4e2d-f689-486a-846e-725c0</span></div>
<span class="t" style="left:321.57px;top:1191.68px;transform:scaleX(1.1492);font-size:24px;color:#666666">Description</span>
<span class="t" style="left:926.59px;top:1191.68px;transform:scaleX(1.1365);font-size:24px;color:#666666">Email</span>
<span class="t" style="left:322.66px;top:1250.91px;transform:scaleX(1.0858);font-size:32px;color:#212121;-webkit-text-stroke:0.3px #212121">edited1</span>
<span class="t" style="left:928.75px;top:1250.91px;transform:scaleX(1.1623);font-size:32px;color:#212121;-webkit-text-stroke:0.3px #212121">testname@gmail.com</span>
<span class="t" style="left:321.64px;top:1369.68px;transform:scaleX(1.1098);font-size:24px;color:#666666">Phone Number</span>
<span class="t" style="left:322.62px;top:1428.91px;transform:scaleX(1.1346);font-size:32px;color:#212121;-webkit-text-stroke:0.3px #212121">00000000</span>
<span class="t" style="left:926.00px;top:887.31px;transform:scaleX(1.0983);font-size:32px;color:#757575">ID Number</span>
<span class="t" style="left:1591.13px;top:385.30px;transform:scaleX(0.9940);font-size:28px;color:#757575">Search...</span>
<span class="t" style="left:2271.87px;top:367.57px;transform:scaleX(1.0166);font-size:20px;color:#757575">Rows</span>
<span class="t" style="left:2271.75px;top:401.83px;transform:scaleX(0.9199);font-size:25px;color:#212121">10</span>
<span class="t" style="left:2476.01px;top:405.60px;transform:scaleX(1.0605);font-size:30px;color:#212121;-webkit-text-stroke:0.5px #212121">page</span>
<span class="t" style="left:2577.59px;top:405.60px;transform:scaleX(0.9717);font-size:30px;color:#212121;-webkit-text-stroke:0.5px #212121">of</span>
<span class="t" style="left:2616.09px;top:405.60px;transform:scaleX(0.9667);font-size:30px;color:#212121;font-weight:bold">2</span>
<span class="t" style="left:1557.08px;top:476.68px;transform:scaleX(1.0197);font-size:24px;color:#696969;font-weight:bold">Code</span>
<span class="t" style="left:1957.29px;top:476.68px;transform:scaleX(1.0462);font-size:24px;color:#696969;font-weight:bold">Type</span>
<span class="t" style="left:2356.32px;top:476.68px;transform:scaleX(1.0473);font-size:24px;color:#696969;font-weight:bold">Name</span>
<span class="t" style="left:1611.81px;top:602.48px;transform:scaleX(1.0763);font-size:24px;color:#000">1007846</span>
<span class="t" style="left:1956.34px;top:602.48px;transform:scaleX(0.9640);font-size:24px;color:#000">CORPORATE</span>
<span class="t" style="left:2358.11px;top:602.48px;transform:scaleX(1.0601);font-size:24px;color:#000">wavelet solutions</span>
<span class="t" style="left:1611.79px;top:658.48px;transform:scaleX(1.0881);font-size:24px;color:#000">1000294</span>
<span class="t" style="left:1955.27px;top:658.48px;transform:scaleX(1.0148);font-size:24px;color:#000">INDIVIDUAL</span>
<span class="t" style="left:2357.69px;top:658.48px;transform:scaleX(1.0478);font-size:24px;color:#000">test1</span>
<span class="t" style="left:1611.79px;top:714.48px;transform:scaleX(1.0905);font-size:24px;color:#000">1000580</span>
<span class="t" style="left:1955.27px;top:714.48px;transform:scaleX(1.0148);font-size:24px;color:#000">INDIVIDUAL</span>
<span class="t" style="left:2357.47px;top:714.48px;transform:scaleX(1.0576);font-size:24px;color:#000">TT22</span>
<span class="t" style="left:1611.78px;top:770.48px;transform:scaleX(1.0917);font-size:24px;color:#000">1000295</span>
<span class="t" style="left:1955.27px;top:770.48px;transform:scaleX(1.0148);font-size:24px;color:#000">INDIVIDUAL</span>
<span class="t" style="left:2357.90px;top:770.48px;transform:scaleX(1.0023);font-size:24px;color:#000">VERTHYS Sdn Bhd</span>
<span class="t" style="left:1613.43px;top:826.48px;transform:scaleX(1.0713);font-size:24px;color:#000">test015</span>
<span class="t" style="left:1955.27px;top:826.48px;transform:scaleX(1.0148);font-size:24px;color:#000">INDIVIDUAL</span>
<span class="t" style="left:2357.68px;top:826.48px;transform:scaleX(1.0713);font-size:24px;color:#000">test015</span>
<span class="t" style="left:1611.78px;top:882.48px;transform:scaleX(1.0917);font-size:24px;color:#000">1000508</span>
<span class="t" style="left:1955.27px;top:882.48px;transform:scaleX(1.0148);font-size:24px;color:#000">INDIVIDUAL</span>
<span class="t" style="left:2357.47px;top:882.48px;transform:scaleX(1.0513);font-size:24px;color:#000">Tamilselvam</span>
<span class="t" style="left:1611.78px;top:938.48px;transform:scaleX(1.0917);font-size:24px;color:#000">1000628</span>
<span class="t" style="left:1956.34px;top:938.48px;transform:scaleX(0.9640);font-size:24px;color:#000">CORPORATE</span>
<span class="t" style="left:2356.12px;top:938.48px;transform:scaleX(0.9887);font-size:24px;color:#000">MEDIA PRIMA</span>
<span class="t" style="left:1611.78px;top:994.48px;transform:scaleX(1.0917);font-size:24px;color:#000">1000308</span>
<span class="t" style="left:1956.34px;top:994.48px;transform:scaleX(0.9640);font-size:24px;color:#000">CORPORATE</span>
<span class="t" style="left:2358.00px;top:994.48px;transform:scaleX(1.0428);font-size:24px;color:#000">Ahmad syarqawi bin mohd ha...</span>
<span class="t" style="left:1611.79px;top:1050.48px;transform:scaleX(1.0905);font-size:24px;color:#000">1006800</span>
<span class="t" style="left:1955.27px;top:1050.48px;transform:scaleX(1.0148);font-size:24px;color:#000">INDIVIDUAL</span>
<span class="t" style="left:2357.68px;top:1050.48px;transform:scaleX(1.0690);font-size:24px;color:#000">Josy Tester</span>
<span class="t" style="left:1611.78px;top:1106.48px;transform:scaleX(1.0941);font-size:24px;color:#000">1000582</span>
<span class="t" style="left:1955.27px;top:1106.48px;transform:scaleX(1.0148);font-size:24px;color:#000">INDIVIDUAL</span>
<span class="t" style="left:2356.24px;top:1106.48px;transform:scaleX(1.1005);font-size:24px;color:#000">hello</span>
<span class="t" style="left:2813.32px;top:544.77px;transform:rotate(90deg) scaleX(1.0291);font-size:24px;color:#000">Columns</span>
<span class="t" style="left:2813.32px;top:717.78px;transform:rotate(90deg) scaleX(1.0634);font-size:24px;color:#000">Filters</span>
</div>

<div class="abs" style="left:292px;top:457.5px;width:1192px;height:1027.5px;box-sizing:border-box;border:10.6px solid #e83f24"></div>
<div class="abs" style="left:1522px;top:564px;width:1229px;height:88.5px;box-sizing:border-box;border:10.4px solid #e83f24"></div>
<script>(function(){var w=window.innerWidth;if(w&&Math.abs(w-2870)>2){document.documentElement.style.zoom=(w/2870);}})();</script>
</body></html>
